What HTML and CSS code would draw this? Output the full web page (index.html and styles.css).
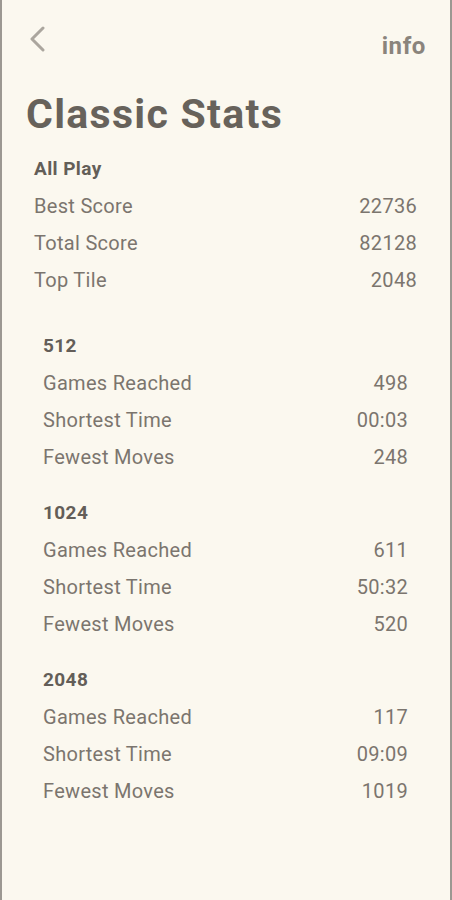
FILE: index.html
```html
<!DOCTYPE html>
<html lang="en">
<head>
<meta charset="utf-8">
<title>Classic Stats</title>
<link rel="stylesheet" href="styles.css">
</head>
<body>
<div class="page">
  <header class="topbar">
    <button class="back" aria-label="Back">
      <svg width="20" height="26" viewBox="0 0 20 26" fill="none">
        <path d="M15 2 L4 13 L15 24" stroke="#aba69e" stroke-width="3" stroke-linecap="round" stroke-linejoin="round"/>
      </svg>
    </button>
    <span class="info">info</span>
  </header>
  <h1 class="title">Classic Stats</h1>

  <section class="group">
    <h2 class="group-title">All Play</h2>
    <div class="row"><span>Best Score</span><span>22736</span></div>
    <div class="row"><span>Total Score</span><span>82128</span></div>
    <div class="row"><span>Top Tile</span><span>2048</span></div>

    <div class="subgroups">
      <section class="sub">
        <h3 class="group-title">512</h3>
        <div class="row"><span>Games Reached</span><span>498</span></div>
        <div class="row"><span>Shortest Time</span><span>00:03</span></div>
        <div class="row"><span>Fewest Moves</span><span>248</span></div>
      </section>
      <section class="sub">
        <h3 class="group-title">1024</h3>
        <div class="row"><span>Games Reached</span><span>611</span></div>
        <div class="row"><span>Shortest Time</span><span>50:32</span></div>
        <div class="row"><span>Fewest Moves</span><span>520</span></div>
      </section>
      <section class="sub">
        <h3 class="group-title">2048</h3>
        <div class="row"><span>Games Reached</span><span>117</span></div>
        <div class="row"><span>Shortest Time</span><span>09:09</span></div>
        <div class="row"><span>Fewest Moves</span><span>1019</span></div>
      </section>
    </div>
  </section>
</div>
</body>
</html>
```
FILE: styles.css
```css
* { box-sizing: border-box; }
html, body {
  margin: 0;
  padding: 0;
  background: #fbf8ef;
}
body {
  font-family: Roboto, "Liberation Sans", sans-serif;
  color: #7b756e;
}
.page {
  min-height: 900px;
  border-left: 2px solid #9c9892;
  border-right: 2px solid #9c9892;
  background: #fbf8ef;
}
.topbar {
  height: 64px;
  display: flex;
  justify-content: space-between;
  align-items: flex-start;
  padding: 26px 24px 0 26px;
}
.back {
  border: 0;
  background: none;
  padding: 0;
  width: 20px;
  height: 26px;
  display: block;
}
.back svg { display: block; }
.info {
  font-size: 24px;
  font-weight: 700;
  letter-spacing: 0.6px;
  color: #8a847c;
  margin-top: 7px;
  line-height: 26px;
}
.title {
  margin: 26px 0 0 0;
  padding-left: 24px;
  font-size: 41px;
  line-height: 48px;
  letter-spacing: 1.3px;
  font-weight: 700;
  color: #67625b;
}
.group {
  margin-top: 12px;
  padding: 0 33px 0 32px;
}
.group-title {
  margin: 0;
  font-size: 19px;
  font-weight: 700;
  letter-spacing: 0.4px;
  line-height: 37px;
  color: #635e58;
}
.row {
  display: flex;
  justify-content: space-between;
  align-items: center;
  height: 37px;
  font-size: 20px;
  letter-spacing: 0.3px;
}
.subgroups {
  padding: 29px 9px 0 9px;
  display: flex;
  flex-direction: column;
  gap: 19px;
}
```
